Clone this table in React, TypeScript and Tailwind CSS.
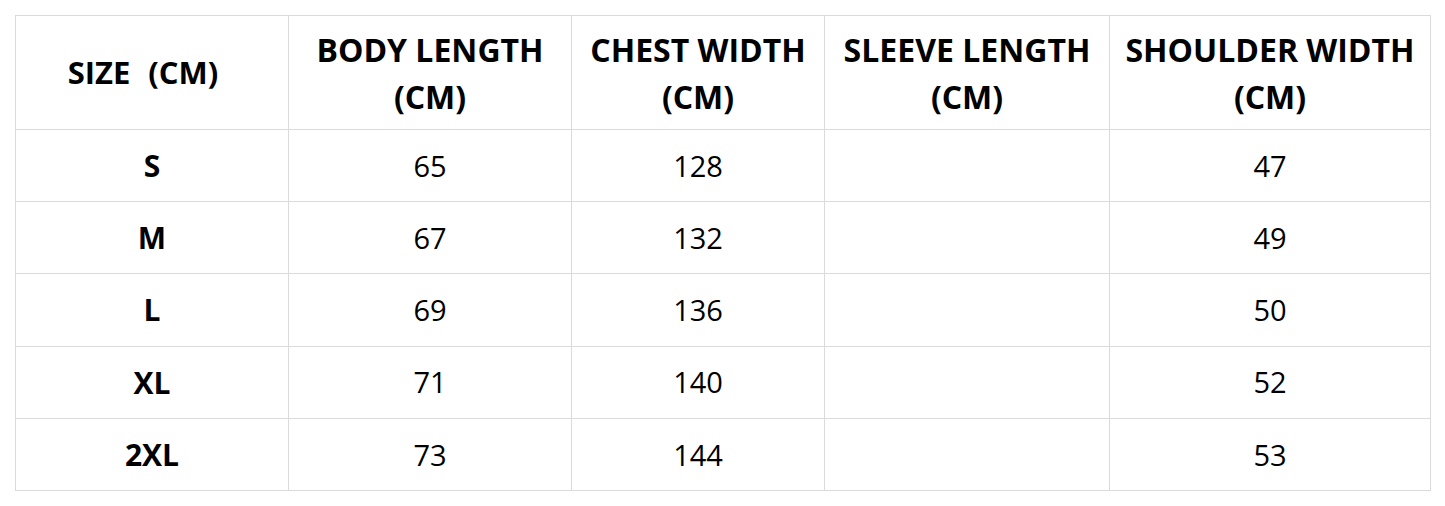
const headers = [
  ['BODY LENGTH', '(CM)'],
  ['CHEST WIDTH', '(CM)'],
  ['SLEEVE LENGTH', '(CM)'],
  ['SHOULDER WIDTH', '(CM)'],
]

const rows = [
  { size: 'S', body: '65', chest: '128', sleeve: '', shoulder: '47' },
  { size: 'M', body: '67', chest: '132', sleeve: '', shoulder: '49' },
  { size: 'L', body: '69', chest: '136', sleeve: '', shoulder: '50' },
  { size: 'XL', body: '71', chest: '140', sleeve: '', shoulder: '52' },
  { size: '2XL', body: '73', chest: '144', sleeve: '', shoulder: '53' },
]

const widths = ['w-[283px]', 'w-[253px]', 'w-[285px]', 'w-[321px]']

export default function App() {
  return (
    <div className="min-h-screen bg-white pl-[15px] pt-[15px] font-['Open_Sans','Noto_Sans',sans-serif] text-black">
      <table className="table-fixed border-collapse text-center">
        <thead>
          <tr className="h-[114px]">
            <th className="w-[273px] border border-[#dadada] p-0 pr-[18px] text-[31px] font-bold">
              SIZE<span className="ml-[18px]">(CM)</span>
            </th>
            {headers.map((lines, i) => (
              <th
                key={i}
                className={`${widths[i]} border border-[#dadada] p-0 text-[32px] font-bold leading-[47px]`}
              >
                {lines.map((l) => (
                  <div key={l}>{l}</div>
                ))}
              </th>
            ))}
          </tr>
        </thead>
        <tbody>
          {rows.map((r) => (
            <tr key={r.size} className="h-[72.2px]">
              <td className="border border-[#dadada] p-0 text-[30px] font-bold">{r.size}</td>
              <td className="border border-[#dadada] p-0 text-[29px]">{r.body}</td>
              <td className="border border-[#dadada] p-0 text-[29px]">{r.chest}</td>
              <td className="border border-[#dadada] p-0 text-[29px]">{r.sleeve}</td>
              <td className="border border-[#dadada] p-0 text-[29px]">{r.shoulder}</td>
            </tr>
          ))}
        </tbody>
      </table>
    </div>
  )
}
